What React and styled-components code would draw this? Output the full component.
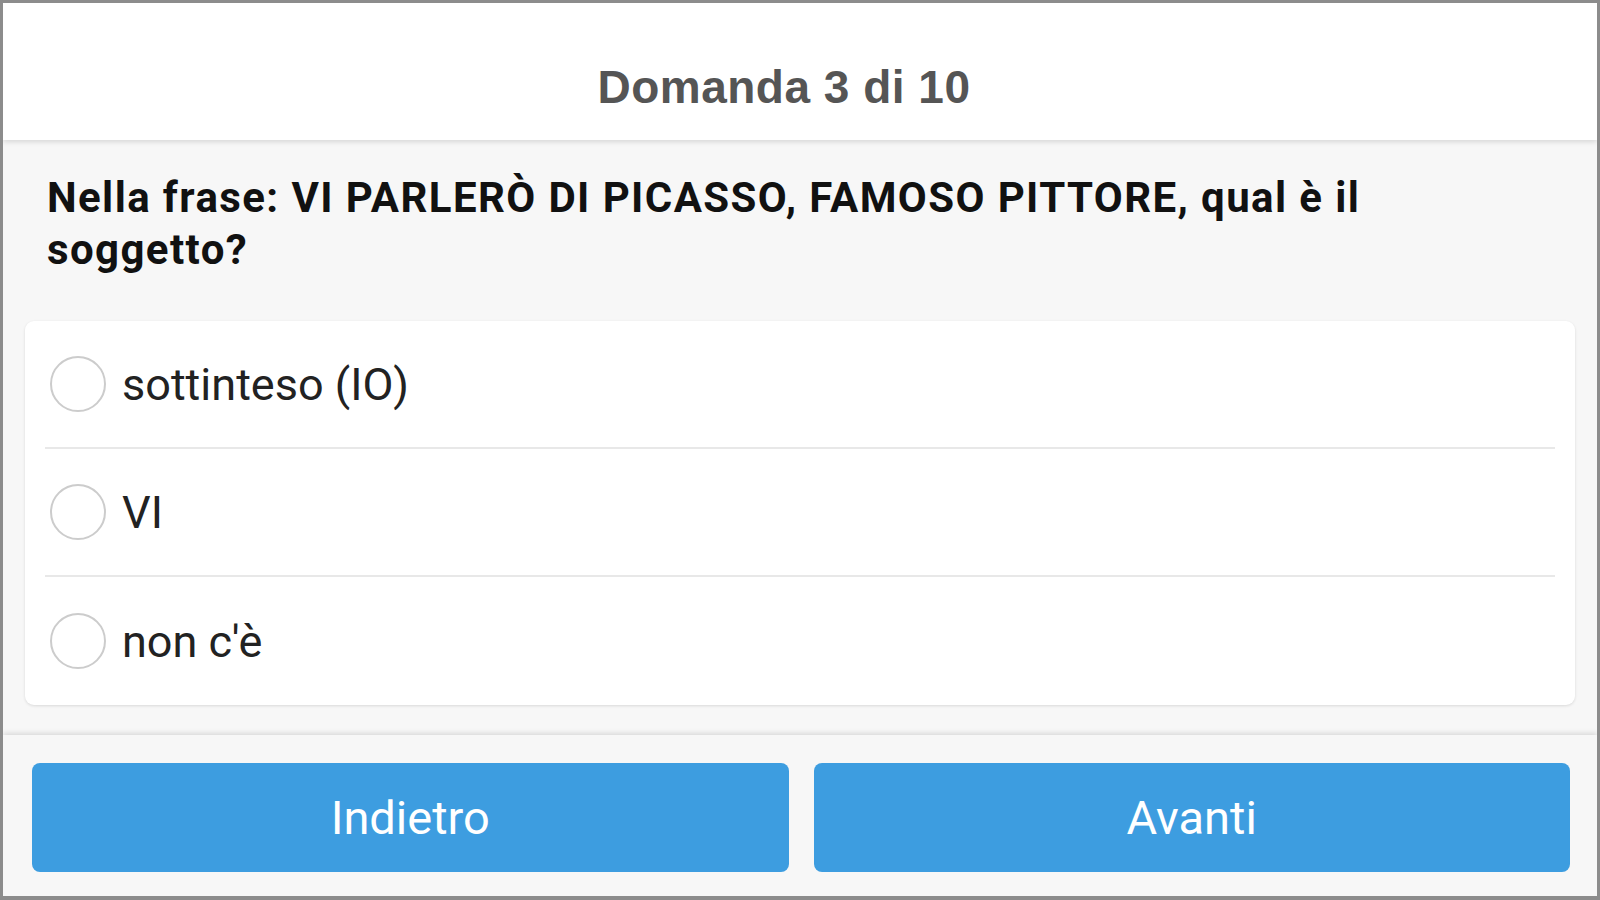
import React, { useState } from 'react';
import styled, { createGlobalStyle } from 'styled-components';

const GlobalStyle = createGlobalStyle`
  html, body {
    margin: 0;
    padding: 0;
    background: #ffffff;
  }
  * {
    box-sizing: border-box;
  }
`;

const Frame = styled.div`
  width: 1600px;
  height: 900px;
  display: flex;
  flex-direction: column;
  border-style: solid;
  border-color: #8c8c8c;
  border-width: 3px 3px 4px 3px;
  background: #f7f7f7;
  font-family: Roboto, "Liberation Sans", Arial, sans-serif;
  overflow: hidden;
`;

const Header = styled.header`
  position: relative;
  z-index: 2;
  height: 137px;
  flex-shrink: 0;
  display: flex;
  justify-content: center;
  padding: 61px 32px 0 0;
  background: #ffffff;
  box-shadow: 0 2px 5px rgba(0, 0, 0, 0.13);
`;

const Title = styled.h1`
  margin: 0;
  font-family: "Liberation Sans", Arial, sans-serif;
  font-size: 46px;
  line-height: 46px;
  font-weight: 700;
  letter-spacing: 0.5px;
  color: #555555;
`;

const Main = styled.main`
  flex: 1;
  display: flex;
  flex-direction: column;
  padding: 32px 22px 0 22px;
`;

const Question = styled.p`
  margin: 0 60px 45px 22px;
  font-size: 42px;
  line-height: 52px;
  font-weight: 700;
  letter-spacing: 1.4px;
  color: #111111;
`;

const Card = styled.ul`
  list-style: none;
  margin: 0;
  padding: 0;
  background: #ffffff;
  border-radius: 9px;
  box-shadow: 0 1px 3px rgba(0, 0, 0, 0.12);
`;

const Option = styled.li`
  height: 128px;
  margin: 0 20px;
  display: flex;
  align-items: center;
  gap: 16px;
  border-bottom: ${p => (p.$last ? 'none' : '2px solid #e8e8e8')};
  cursor: pointer;
`;

const Radio = styled.span`
  width: 56px;
  height: 56px;
  margin-left: 5px;
  border-radius: 50%;
  border: 2px solid ${p => (p.$checked ? '#3d9de0' : '#cccccc')};
  background: ${p => (p.$checked ? 'radial-gradient(circle, #3d9de0 0 12px, #fff 13px)' : '#ffffff')};
  flex-shrink: 0;
`;

const OptionText = styled.span`
  font-size: 45px;
  color: #222222;
`;

const Footer = styled.footer`
  position: relative;
  z-index: 2;
  height: 161px;
  flex-shrink: 0;
  display: grid;
  grid-template-columns: 1fr 1fr;
  gap: 25px;
  padding: 28px 27px 24px 29px;
  background: #f7f7f7;
  box-shadow: 0 -2px 5px rgba(0, 0, 0, 0.12);
`;

const NavButton = styled.button`
  border: none;
  border-radius: 8px;
  background: #3d9de0;
  color: #ffffff;
  font-family: Roboto, "Liberation Sans", Arial, sans-serif;
  font-size: 47px;
  cursor: pointer;
`;

const options = ['sottinteso (IO)', 'VI', "non c'è"];

const App = () => {
  const [selected, setSelected] = useState(null);

  return (
    <>
      <GlobalStyle />
      <Frame>
        <Header>
          <Title>Domanda 3 di 10</Title>
        </Header>
        <Main>
          <Question>
            Nella frase: VI PARLERÒ DI PICASSO, FAMOSO PITTORE, qual è il soggetto?
          </Question>
          <Card>
            {options.map((opt, i) => (
              <Option key={opt} $last={i === options.length - 1} onClick={() => setSelected(i)}>
                <Radio $checked={selected === i} />
                <OptionText>{opt}</OptionText>
              </Option>
            ))}
          </Card>
        </Main>
        <Footer>
          <NavButton>Indietro</NavButton>
          <NavButton>Avanti</NavButton>
        </Footer>
      </Frame>
    </>
  );
};

export default App;
